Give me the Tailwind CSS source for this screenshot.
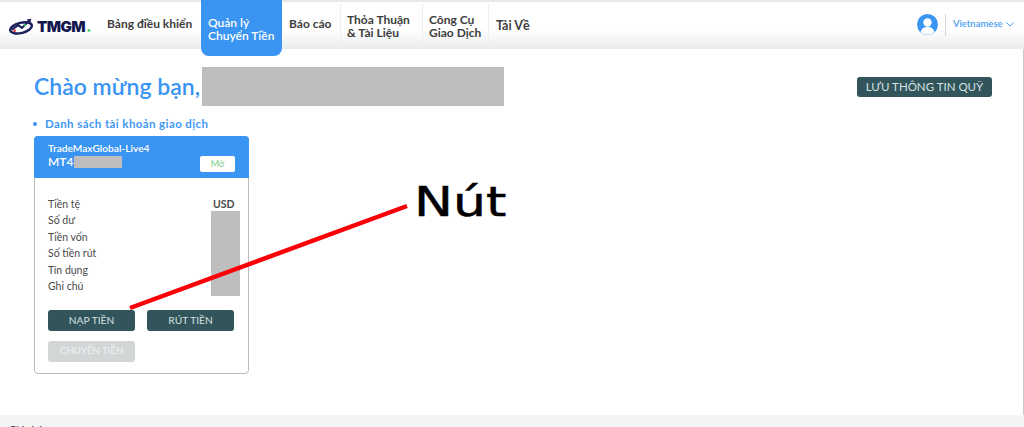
<!DOCTYPE html>
<html lang="en">
<head>
    <meta charset="UTF-8">
    <title>TMGM</title>
    <script src="https://cdn.jsdelivr.net/npm/@tailwindcss/browser@4"></script>
</head>
<body class="font-['Lato','Noto_Sans',sans-serif] bg-white">
    <div class="relative w-[1024px] h-[427px] overflow-hidden flex flex-col">
        <!-- header -->
        <div class="h-[2px] bg-[#e8e8e8]"></div>
        <div class="h-[47px] shrink-0 flex items-start bg-gradient-to-b from-white from-60% to-[#e9ebed] text-[12px] font-bold leading-[12.5px] text-[#3d3d3d]">
            <div class="w-[107px] h-[47px] pl-[9px] flex items-center gap-[3px] pt-[1px]">
                <svg width="25" height="17" viewBox="0 0 27 17">
                    <ellipse cx="13" cy="10" rx="12" ry="5.5" fill="none" stroke="#1b1f5c" stroke-width="2.6" transform="rotate(-14 13 10)"/>
                    <path d="M3 12 L10 7 L14 10 L22 2" fill="none" stroke="#1b1f5c" stroke-width="2.2"/>
                    <path d="M19 1 L24 0 L23 5 Z" fill="#1b1f5c"/>
                    <circle cx="6" cy="13" r="1.4" fill="#e33"/>
                    <circle cx="17" cy="7" r="1.3" fill="#3c6"/>
                </svg>
                <span class="text-[15px] leading-none font-black text-[#14184f] tracking-[-0.6px] font-['Inter',sans-serif]">TMGM<span class="text-[#4fd66a] ml-[1px]">.</span></span>
            </div>
            <div class="w-[94px] h-[47px] flex items-center pb-[2px]">Bảng điều khiển</div>
            <div class="w-[81px] h-[56px] -mt-[2px] pt-[17px] pl-[7px] bg-[#3a94f2] rounded-b-[8px] text-white font-semibold z-10">Quản lý<br>Chuyển Tiền</div>
            <div class="w-[58px] h-[47px] pl-[7px] flex items-center pb-[2px] text-[12px]">Báo cáo</div>
            <div class="w-[82px] h-[40px] mt-[1px] pl-[6px] pt-[11px] border-l border-[#eeeeee]">Thỏa Thuận<br>&amp; Tài Liệu</div>
            <div class="w-[66px] h-[40px] mt-[1px] pl-[6px] pt-[11px] border-l border-[#eeeeee]">Công Cụ<br>Giao Dịch</div>
            <div class="h-[40px] mt-[1px] pl-[7px] pt-[17px] border-l border-[#eeeeee] text-[12.5px]">Tải Về</div>
            <div class="ml-auto h-[47px] w-[107px] flex items-center pb-[2px]">
                <svg width="21" height="21" viewBox="0 0 21 21">
                    <circle cx="10.5" cy="10.5" r="10.5" fill="#3a94f2"/>
                    <circle cx="10.5" cy="8.5" r="4.2" fill="white"/>
                    <path d="M3.5 18 C5 13.5 8 13 10.5 13 C13 13 16 13.5 17.5 18 A10 10 0 0 1 3.5 18 Z" fill="white"/>
                </svg>
                <div class="w-px h-[22px] bg-[#d5d5d5] ml-[7px] mr-[7px]"></div>
                <span class="text-[9.5px] font-semibold text-[#4a9df0]">Vietnamese</span>
                <svg class="ml-[3px]" width="8" height="5" viewBox="0 0 8 5"><path d="M0.5 0.5 L4 4 L7.5 0.5" fill="none" stroke="#4a9df0" stroke-width="1"/></svg>
            </div>
        </div>

        <!-- content -->
        <div class="flex-1 border-r border-[#c9c9c9] pl-[34px] pr-[31px] pt-[18px]">
            <div class="flex items-start justify-between">
                <div class="flex items-center gap-[2px]">
                    <h1 class="text-[23px] leading-none font-semibold text-[#3a94f2]">Chào mừng bạn,</h1>
                    <div class="w-[302px] h-[39px] bg-[#bebebe]"></div>
                </div>
                <button class="mt-[10px] w-[135px] h-[20px] rounded-[3px] bg-[#31555b] text-[#d7e0e1] text-[11.5px] leading-none">LƯU THÔNG TIN QUỸ</button>
            </div>

            <div class="mt-[11px] flex items-center gap-[8px] text-[11.5px] leading-[14px] font-bold text-[#3f97f2] tracking-[0.4px]">
                <span class="w-[4px] h-[4px] rounded-full bg-[#3a94f2] -ml-px"></span>Danh sách tài khoản giao dịch
            </div>

            <div class="mt-[5px] w-[215px] h-[238px] rounded-[4px] border border-[#bdbdbd]">
                <div class="h-[42px] -m-px rounded-t-[4px] bg-[#3a94f2] pl-[14px] pr-[14px] pt-[6px] text-white flex justify-between">
                    <div>
                        <div class="text-[10.2px] leading-[12px] font-semibold">TradeMaxGlobal-Live4</div>
                        <div class="mt-[1px] flex items-center gap-[1px] text-[12px] leading-[13px] font-semibold">MT4 <span class="w-[48px] h-[12px] bg-[#bebebe]"></span></div>
                    </div>
                    <div class="self-end mb-[6px] w-[35px] h-[16px] rounded-[2px] bg-white text-[#7fcf8a] text-[9px] leading-[16px] text-center">Mở</div>
                </div>

                <div class="pl-[13px] pr-[8px] pt-[18.5px] flex justify-between text-[10.5px] leading-[16.5px] text-[#4a4a4a]">
                    <div class="flex flex-col">
                        <span>Tiền tệ</span>
                        <span>Số dư</span>
                        <span>Tiền vốn</span>
                        <span>Số tiền rút</span>
                        <span>Tín dụng</span>
                        <span>Ghi chú</span>
                    </div>
                    <div class="w-[29px] flex flex-col items-start">
                        <span class="font-bold leading-[14px] pl-[2px] pt-[1px]">USD</span>
                        <div class="w-[29px] h-[85px] bg-[#bebebe]"></div>
                    </div>
                </div>

                <div class="pl-[13px] mt-[14px] grid grid-cols-[87px_87px] gap-x-[12px] gap-y-[10px] text-[10.2px] leading-none">
                    <button class="h-[21px] rounded-[3px] bg-[#31555b] text-[#d7e0e1]">NẠP TIỀN</button>
                    <button class="h-[21px] rounded-[3px] bg-[#31555b] text-[#d7e0e1]">RÚT TIỀN</button>
                    <button class="h-[21px] rounded-[3px] bg-[#d3d6d7] text-[#f1f2f2] text-[9.7px]">CHUYỂN TIỀN</button>
                </div>
            </div>
        </div>

        <!-- footer strip -->
        <div class="h-[12px] shrink-0 bg-[#f4f4f4] pl-[9px] pt-[8px] text-[10px] leading-[12px] font-semibold text-[#444]">Ghi chú</div>

        <!-- annotation drawn over the page -->
        <svg class="absolute left-0 top-0 pointer-events-none" width="1024" height="427">
            <line x1="130" y1="308" x2="407" y2="206" stroke="#fb0007" stroke-width="4.5"/>
        </svg>
        <div class="absolute left-[414px] top-[177px] origin-left scale-x-[1.27] font-['DejaVu_Sans',sans-serif] text-[41px] leading-[50px] text-black [-webkit-text-stroke:0.5px_black]">Nút</div>
    </div>
</body>
</html>
